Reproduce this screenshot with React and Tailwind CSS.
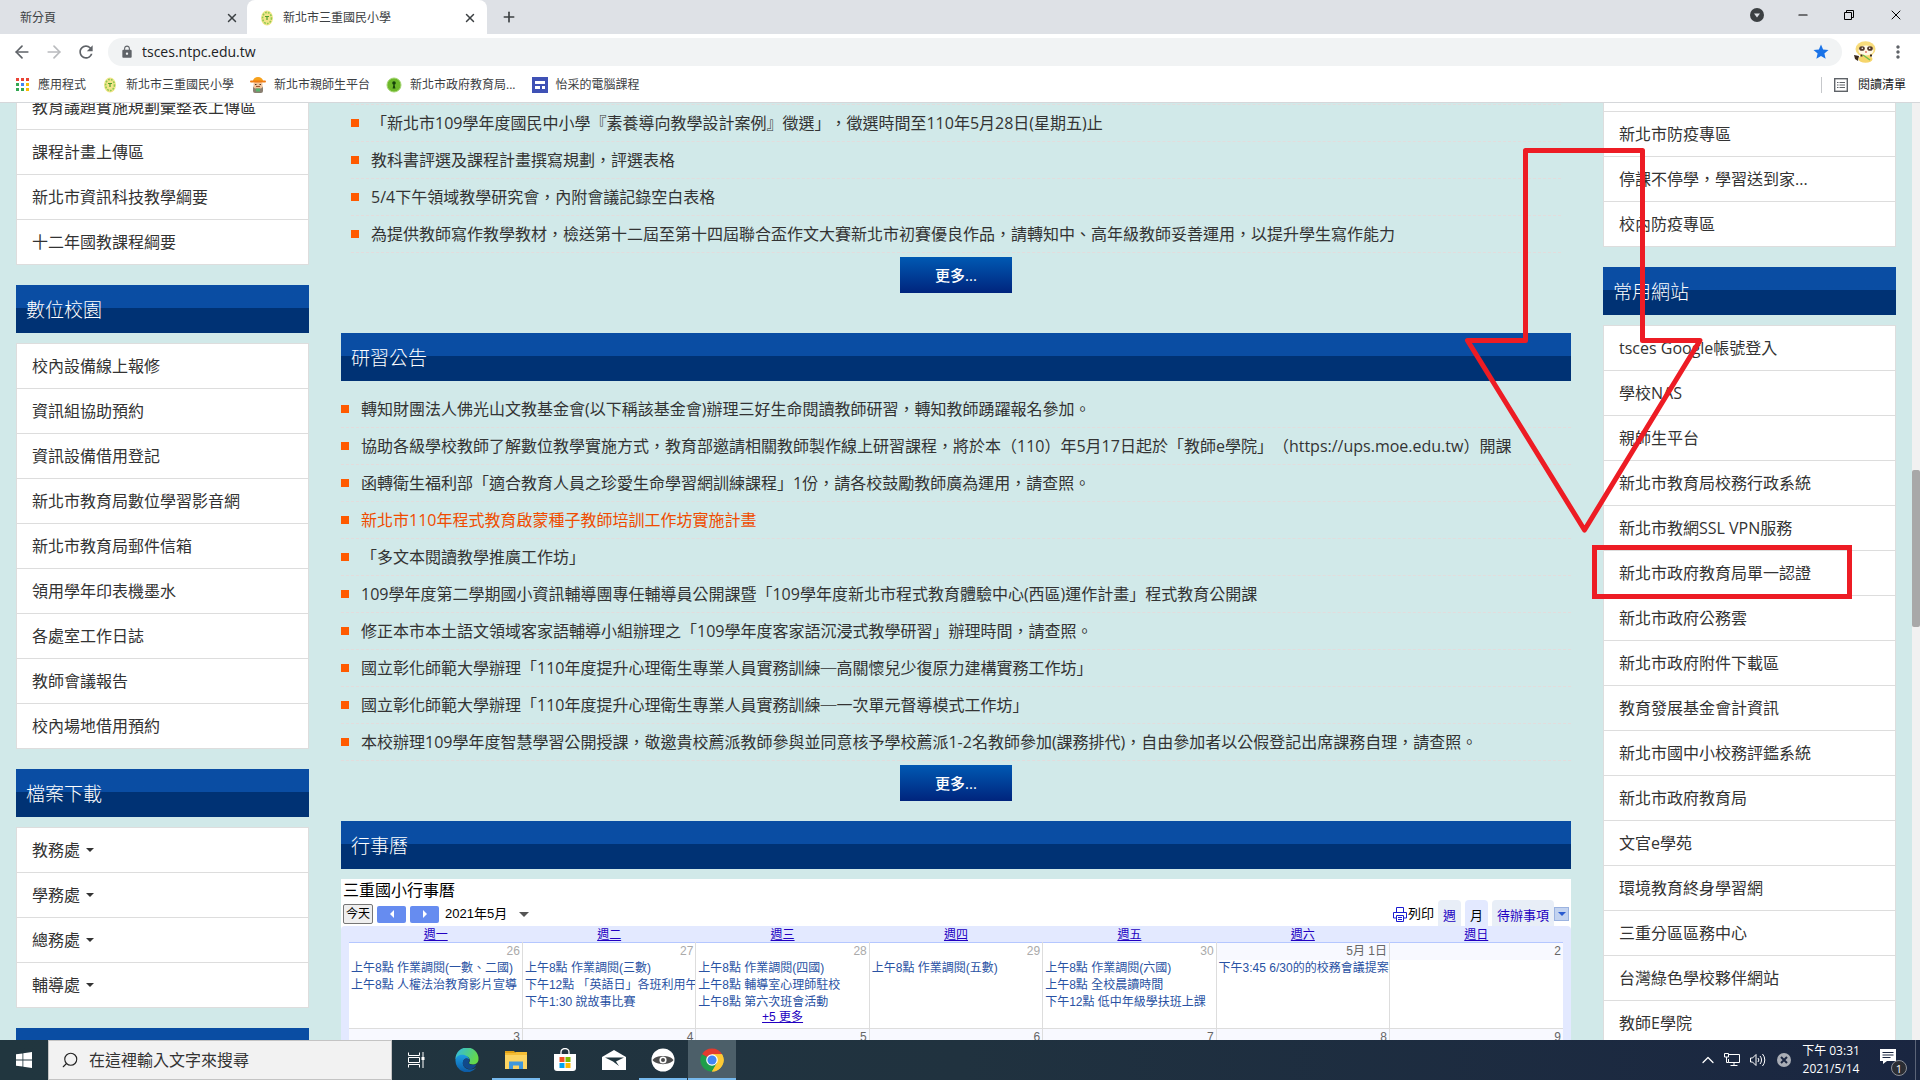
import React from "react";
import {
  ArrowLeft,
  ArrowRight,
  ChevronUp,
  Minus,
  Plus,
  Search,
  X,
} from "lucide-react";
import { MdLock, MdRefresh, MdStar, MdMoreVert } from "react-icons/md";

const courseLinks = ["教育議題實施規劃彙整表上傳區", "課程計畫上傳區", "新北市資訊科技教學綱要", "十二年國教課程綱要"];

const campusLinks = [
  "校內設備線上報修",
  "資訊組協助預約",
  "資訊設備借用登記",
  "新北市教育局數位學習影音網",
  "新北市教育局郵件信箱",
  "領用學年印表機墨水",
  "各處室工作日誌",
  "教師會議報告",
  "校內場地借用預約",
];

const downloadMenus = ["教務處", "學務處", "總務處", "輔導處"];

const epidemicLinks = ["新北市防疫專區", "停課不停學，學習送到家...", "校內防疫專區"];

const commonLinks = [
  "tsces Google帳號登入",
  "學校NAS",
  "親師生平台",
  "新北市教育局校務行政系統",
  "新北市教網SSL VPN服務",
  "新北市政府教育局單一認證",
  "新北市政府公務雲",
  "新北市政府附件下載區",
  "教育發展基金會計資訊",
  "新北市國中小校務評鑑系統",
  "新北市政府教育局",
  "文官e學苑",
  "環境教育終身學習網",
  "三重分區區務中心",
  "台灣綠色學校夥伴網站",
  "教師E學院",
];

const teachingNews = [
  { title: "「新北市109學年度國民中小學『素養導向教學設計案例』徵選」，徵選時間至110年5月28日(星期五)止" },
  { title: "教科書評選及課程計畫撰寫規劃，評選表格" },
  { title: "5/4下午領域教學研究會，內附會議記錄空白表格" },
  { title: "為提供教師寫作教學教材，檢送第十二屆至第十四屆聯合盃作文大賽新北市初賽優良作品，請轉知中、高年級教師妥善運用，以提升學生寫作能力" },
];

const studyNews = [
  { title: "轉知財團法人佛光山文教基金會(以下稱該基金會)辦理三好生命閱讀教師研習，轉知教師踴躍報名參加。" },
  { title: "協助各級學校教師了解數位教學實施方式，教育部邀請相關教師製作線上研習課程，將於本（110）年5月17日起於「教師e學院」（https://ups.moe.edu.tw）開課" },
  { title: "函轉衛生福利部「適合教育人員之珍愛生命學習網訓練課程」1份，請各校鼓勵教師廣為運用，請查照。" },
  { title: "新北市110年程式教育啟蒙種子教師培訓工作坊實施計畫", hot: true },
  { title: "「多文本閱讀教學推廣工作坊」" },
  { title: "109學年度第二學期國小資訊輔導團專任輔導員公開課暨「109學年度新北市程式教育體驗中心(西區)運作計畫」程式教育公開課" },
  { title: "修正本市本土語文領域客家語輔導小組辦理之「109學年度客家語沉浸式教學研習」辦理時間，請查照。" },
  { title: "國立彰化師範大學辦理「110年度提升心理衛生專業人員實務訓練─高關懷兒少復原力建構實務工作坊」" },
  { title: "國立彰化師範大學辦理「110年度提升心理衛生專業人員實務訓練─一次單元督導模式工作坊」" },
  { title: "本校辦理109學年度智慧學習公開授課，敬邀貴校薦派教師參與並同意核予學校薦派1-2名教師參加(課務排代)，自由參加者以公假登記出席課務自理，請查照。" },
];

const weekdays = ["週一", "週二", "週三", "週四", "週五", "週六", "週日"];

const firstWeek = [
  { date: "26", events: ["上午8點 作業調閱(一數、二國)", "上午8點 人權法治教育影片宣導"] },
  { date: "27", events: ["上午8點 作業調閱(三數)", "下午12點 「英語日」各班利用午", "下午1:30 說故事比賽"] },
  { date: "28", events: ["上午8點 作業調閱(四國)", "上午8點 輔導室心理師駐校", "上午8點 第六次班會活動"], more: "+5 更多" },
  { date: "29", events: ["上午8點 作業調閱(五數)"] },
  { date: "30", events: ["上午8點 作業調閱(六國)", "上午8點 全校晨讀時間", "下午12點 低中年級學扶班上課"] },
  { date: "5月 1日", current: true, events: ["下午3:45 6/30的的校務會議提案"] },
  { date: "2", current: true, events: [] },
];

const secondWeek = ["3", "4", "5", "6", "7", "8", "9"];

/* ---------- small drawings ---------- */

function SchoolIcon() {
  return (
    <svg viewBox="0 0 16 16" className="w-4 h-4 shrink-0">
      <ellipse cx="8" cy="8" rx="6" ry="7.500" fill="#f3e58a" />
      <ellipse cx="8" cy="8" rx="4.400" ry="5.600" fill="none" stroke="#8fcb52" strokeWidth="1.600" strokeDasharray="1.800 1.200" />
      <path d="M6 6.500h4M8 6.500v3.500" stroke="#4f9d2c" strokeWidth="1.200" />
    </svg>
  );
}

function ParentIcon() {
  return (
    <svg viewBox="0 0 16 16" className="w-4 h-4 shrink-0">
      <rect x="3" y="9" width="10" height="7" rx="2" fill="#8a7f72" />
      <rect x="3.500" y="5" width="9" height="6.500" rx="2" fill="#f2c49b" />
      <path d="M5 7.500h1.500M9.500 7.500H11" stroke="#4a3326" />
      <path d="M6 9.500h4" stroke="#a4552e" />
      <path d="M3 4a5 4 0 0 1 10 0z" fill="#f7a11b" />
      <rect x="0" y="3.500" width="16" height="2" rx="1" fill="#ef7d13" />
      <rect x="6" y="11.500" width="4" height="3" fill="#58b56b" />
    </svg>
  );
}

function KeyholeIcon() {
  return (
    <svg viewBox="0 0 16 16" className="w-4 h-4 shrink-0">
      <circle cx="8" cy="8" r="7" fill="#6db82a" stroke="#a5d574" />
      <circle cx="8" cy="6" r="1.800" fill="#16420a" />
      <path d="M8 5l1.400 6.500H6.600z" fill="#16420a" />
    </svg>
  );
}

function SitesIcon() {
  return (
    <svg viewBox="0 0 16 16" className="w-4 h-4 shrink-0">
      <path d="M0 0h16v16H0z" fill="#3f51b5" />
      <path d="M3 4h10v3H3zM3 9h5v3H3zM10 9h3v3h-3z" fill="#fff" />
    </svg>
  );
}

function AppsIcon() {
  const colors = ["#ea4335", "#ea4335", "#ea4335", "#34a853", "#4285f4", "#fbbc05", "#34a853", "#34a853", "#fbbc05"];
  return (
    <svg viewBox="0 0 14 14" className="w-3.5 h-3.5 shrink-0">
      {colors.map((color, i) => (
        <rect key={i} x={(i % 3) * 5} y={Math.floor(i / 3) * 5} width="3" height="3" fill={color} />
      ))}
    </svg>
  );
}

function ReadingListIcon() {
  return (
    <svg viewBox="0 0 14 14" className="w-3.5 h-3.5 shrink-0" fill="none" stroke="#5f6368">
      <rect x="0.700" y="0.700" width="12.600" height="12.600" strokeWidth="1.400" />
      <path d="M3 4.500h1.500M5.500 4.500H11M3 7h1.500M5.500 7H11M3 9.500h1.500M5.500 9.500H11" strokeWidth="1.200" />
    </svg>
  );
}

function AvatarIcon() {
  return (
    <svg viewBox="0 0 22 22" className="w-[22px] h-[22px]">
      <path d="M0 14l5 1-1 5-3-2z" fill="#3a2a1d" />
      <ellipse cx="11.500" cy="18" rx="7" ry="3.800" fill="#f6d56b" />
      <ellipse cx="11.500" cy="8" rx="10" ry="7.800" fill="#f8dc7c" />
      <ellipse cx="12" cy="9.500" rx="7.500" ry="5" fill="#fff8e6" />
      <ellipse cx="8" cy="7.500" rx="2.800" ry="2.300" fill="#51372a" />
      <ellipse cx="16" cy="7.500" rx="2.800" ry="2.300" fill="#51372a" />
      <circle cx="8.300" cy="7.300" r="0.800" fill="#fff" />
      <circle cx="15.700" cy="7.300" r="0.800" fill="#fff" />
      <circle cx="12" cy="11" r="0.900" fill="#e06a5a" />
      <path d="M7.500 13.500v2M17 13.500v2" stroke="#3a2a1d" strokeWidth="2" />
      <path d="M9 14l7 5" stroke="#6fbf4a" strokeWidth="1.500" />
    </svg>
  );
}

function PrintIcon() {
  return (
    <svg viewBox="0 0 14 15" className="w-3.5 h-[15px]" fill="none" stroke="#1a1ad0">
      <path d="M3.500 5V0.500h7V5M3 11H0.500V5.500h13V11H11" />
      <path d="M3.500 8.500h7v6h-7zM5 10.500h4M5 12.500h4" />
    </svg>
  );
}

function StartIcon() {
  return (
    <svg viewBox="0 0 16 16" className="w-4 h-4" fill="#fff">
      <path d="M0 2.300L6.500 1.400v6.200H0zM7.300 1.300L16 0v7.600H7.300zM0 8.400h6.500v6.200L0 13.700zM7.300 8.400H16V16l-8.700-1.300z" />
    </svg>
  );
}

function TaskViewIcon() {
  return (
    <svg viewBox="0 0 17 16" className="w-[17px] h-4" fill="none" stroke="#fff">
      <path d="M0.500 0.500V3.500H11.500V0.500M0.500 15.500V12.500H11.500V15.500M0.500 5.500h11v5H0.500zM15 0v16" />
      <path d="M13.500 5h3v3h-3z" fill="#fff" stroke="none" />
    </svg>
  );
}

function EdgeIcon() {
  return (
    <svg viewBox="0 0 24 24" className="w-6 h-6">
      <defs>
        <linearGradient id="edgeTop" x1="0" y1="0" x2="1" y2="0.400">
          <stop offset="0" stopColor="#2fb8ea" />
          <stop offset="1" stopColor="#64d94a" />
        </linearGradient>
        <linearGradient id="edgeLow" x1="0" y1="0" x2="0" y2="1">
          <stop offset="0" stopColor="#1b9de2" />
          <stop offset="1" stopColor="#0c59a4" />
        </linearGradient>
      </defs>
      <path d="M0.500 11A11.500 11.500 0 0 1 23.500 11c0 4-3 5.500-5.500 5.500-3 0-4.500-1-3.700-2 1.400-2 .5-6-3.800-6C5 8.500 0.500 12 0.500 11z" fill="url(#edgeTop)" />
      <path d="M0.500 12C1 7.500 6 6 10 7.200c2.500.8 4 2.600 4.300 4.300-3-2.500-6.500-.5-6.500 3.500 0 4 4 7 8.500 6.500 2-.2 4-1.200 5-2A11.500 11.500 0 0 1 0.500 12z" fill="url(#edgeLow)" />
      <path d="M7.800 15c0-4 3.500-6 6.500-3.500.2 1.500-.8 2.500-.8 3.200 0 1.500 3 3 7.800 1.500-.2 1.700-2.700 4.800-6 4.800-4 0-7.500-2.500-7.500-6z" fill="#114a8b" />
    </svg>
  );
}

function FolderIcon() {
  return (
    <svg viewBox="0 0 22 18" className="w-[22px] h-[18px]">
      <path d="M0 0h9l2 2.500H0z" fill="#e0a015" />
      <path d="M0 2h22v16H0z" fill="#fcd462" />
      <path d="M0 2h9l2-1h11v3H0z" fill="#f5bd35" />
      <path d="M4 18v-7.500h14V18h-4v-3.500H8V18z" fill="#3f97dc" />
    </svg>
  );
}

function StoreIcon() {
  return (
    <svg viewBox="0 0 22 24" className="w-[22px] h-6">
      <path d="M7 6V4a4 3.500 0 0 1 8 0v2" fill="none" stroke="#fff" strokeWidth="1.300" />
      <path d="M0 6h22v14a3 3 0 0 1-3 3H3a3 3 0 0 1-3-3z" fill="#fff" />
      <path d="M5.500 9h5v5h-5z" fill="#f25022" />
      <path d="M11.500 9h5v5h-5z" fill="#7fba00" />
      <path d="M5.500 15h5v5h-5z" fill="#00a4ef" />
      <path d="M11.500 15h5v5h-5z" fill="#ffb900" />
    </svg>
  );
}

function MailIcon() {
  return (
    <svg viewBox="0 0 24 20" className="w-6 h-5">
      <path d="M0 7L12 0l12 7v13H0z" fill="#fff" />
      <path d="M3 7.500h19L14 11.500l3 4.500-6-4.500z" fill="#21363f" />
    </svg>
  );
}

function EyeIcon() {
  return (
    <svg viewBox="0 0 24 24" className="w-6 h-6">
      <circle cx="12" cy="12" r="11.500" fill="#fff" />
      <path d="M1.500 12C5 6.500 19 6.500 22.500 12 19 17.500 5 17.500 1.500 12z" fill="#4d4d4d" />
      <circle cx="12" cy="12" r="3.600" fill="#fff" />
      <circle cx="12" cy="12" r="2" fill="#4d4d4d" />
    </svg>
  );
}

function ChromeIcon() {
  return (
    <svg viewBox="0 0 24 24" className="w-6 h-6">
      <path d="M12 12L2 6.200A11.500 11.500 0 0 1 22 6.200z" fill="#e33b2e" />
      <path d="M12 12V6.200h10A11.500 11.500 0 0 1 12 23.500z" fill="#fcc934" />
      <path d="M12 12l5 3-5 8.500A11.500 11.500 0 0 1 2 6.200z" fill="#1e9e4a" />
      <path d="M12 6.200h10A11.500 11.500 0 0 1 12 23.500l5-8.600z" fill="#fcc934" />
      <circle cx="12" cy="12" r="5.800" fill="#fff" />
      <circle cx="12" cy="12" r="4.600" fill="#4285f4" />
    </svg>
  );
}

/* ---------- browser chrome ---------- */

function Bookmark({ icon, children }) {
  return (
    <a href="#" className="flex items-center gap-2">
      {icon}
      {children}
    </a>
  );
}

function BrowserChrome() {
  return (
    <header className="shrink-0 bg-white text-xs text-[#3c4043] border-b border-[#d5d7da]">
      <div className="flex h-[34px] bg-[#dee1e6]">
        <div className="flex items-center justify-between w-[247px] pt-0.5 pl-5 pr-2">
          <span>新分頁</span>
          <button aria-label="關閉分頁">
            <X className="w-3.5 h-3.5" strokeWidth={2.5} />
          </button>
        </div>
        <div className="flex items-center w-60 pt-0.5 pl-3 pr-2.5 bg-white rounded-t-lg">
          <SchoolIcon />
          <span className="flex-1 pl-2">新北市三重國民小學</span>
          <button aria-label="關閉分頁">
            <X className="w-3.5 h-3.5" strokeWidth={2.5} />
          </button>
        </div>
        <button aria-label="新增分頁" className="pl-3.5">
          <Plus className="w-4 h-4" strokeWidth={2.5} />
        </button>
        <div className="flex items-center gap-8 ml-auto pr-4 pb-1 text-black">
          <svg viewBox="0 0 14 14" className="w-3.5 h-3.5">
            <circle cx="7" cy="7" r="7" fill="#3c4043" />
            <path d="M4 5.500h6L7 9.500z" fill="#dee1e6" />
          </svg>
          <button aria-label="最小化">
            <Minus className="w-3.5 h-3.5" strokeWidth={2} />
          </button>
          <button aria-label="還原">
            <svg viewBox="0 0 14 14" className="w-3.5 h-3.5" fill="none" stroke="#000">
              <path d="M2.500 4.500h7v7h-7zM4.500 4V2.500h7v7H10" />
            </svg>
          </button>
          <button aria-label="關閉">
            <X className="w-4 h-4" strokeWidth={1.5} />
          </button>
        </div>
      </div>

      <div className="flex items-center h-9 px-3 text-[#5f6368]">
        <button aria-label="上一頁" className="w-8">
          <ArrowLeft className="w-5 h-5" />
        </button>
        <button aria-label="下一頁" className="w-8 text-[#b9bbbe]">
          <ArrowRight className="w-5 h-5" />
        </button>
        <button aria-label="重新載入" className="w-8">
          <MdRefresh className="w-5 h-5" />
        </button>
        <label className="flex flex-1 items-center h-7 px-3 bg-[#f1f3f4] rounded-full">
          <MdLock className="w-3.5 h-3.5" />
          <input
            type="text"
            aria-label="網址"
            defaultValue="tsces.ntpc.edu.tw"
            className="flex-1 pl-2 bg-transparent text-sm text-[#202124] focus:outline-none"
          />
          <MdStar className="w-[18px] h-[18px] text-[#1a73e8]" />
        </label>
        <div className="flex items-center gap-3 pl-3">
          <AvatarIcon />
          <button aria-label="選單">
            <MdMoreVert className="w-5 h-5" />
          </button>
        </div>
      </div>

      <nav className="flex items-center h-8 pl-4 pr-3.5 pb-0.5 gap-4 text-[#3c4043]">
        <Bookmark icon={<AppsIcon />}>應用程式</Bookmark>
        <Bookmark icon={<SchoolIcon />}>新北市三重國民小學</Bookmark>
        <Bookmark icon={<ParentIcon />}>新北市親師生平台</Bookmark>
        <Bookmark icon={<KeyholeIcon />}>新北市政府教育局...</Bookmark>
        <Bookmark icon={<SitesIcon />}>怡采的電腦課程</Bookmark>
        <div className="flex items-center gap-2.5 h-4 ml-auto pl-3 border-l border-[#c6c8cb] text-[#202124]">
          <ReadingListIcon />
          閱讀清單
        </div>
      </nav>
    </header>
  );
}

/* ---------- site blocks ---------- */

function BlockTitle({ children }) {
  return (
    <h2 className="h-12 px-2.5 text-[19px] leading-[50px] font-light text-white bg-linear-to-b from-[#0a4da3] from-48% to-[#003274] to-48%">
      {children}
    </h2>
  );
}

function LinkList({ items, caret }) {
  return (
    <ul className="bg-white border-x border-t border-[#ddd]">
      {items.map((item) => (
        <li key={item} className="border-b border-[#ddd]">
          <a href="#" className="flex items-center gap-1.5 px-[15px] py-2.5 leading-6">
            {item}
            {caret && (
              <span className="border-x-4 border-t-4 border-x-transparent border-t-[#333]" />
            )}
          </a>
        </li>
      ))}
    </ul>
  );
}

function SideBlock({ title, items, caret }) {
  return (
    <section className="flex flex-col gap-2.5">
      <BlockTitle>{title}</BlockTitle>
      <LinkList items={items} caret={caret} />
    </section>
  );
}

function NewsList({ items }) {
  return (
    <ul>
      {items.map((item) => (
        <li key={item.title} className="flex items-center gap-3 h-[37px] border-b border-dashed border-[#e3dcdc]">
          <span className="w-2 h-2 shrink-0 bg-[#ff5a00]" />
          <a href="#" className={`whitespace-nowrap ${item.hot ? "text-[#ef4c00]" : ""}`}>
            {item.title}
          </a>
        </li>
      ))}
    </ul>
  );
}

function MoreButton() {
  return (
    <div className="flex justify-center pt-1">
      <button className="w-28 h-9 text-[15px] font-medium text-white bg-linear-to-b from-[#0059b3] to-[#00247d]">
        更多...
      </button>
    </div>
  );
}

function Calendar() {
  return (
    <div className="bg-white text-xs text-black font-['Liberation_Sans','Noto_Sans_CJK_TC',sans-serif]">
      <h3 className="pl-0.5 text-base leading-6 h-[21px]">三重國小行事曆</h3>
      <div className="flex items-end justify-between h-[26px] px-0.5">
        <div className="flex items-center gap-1 pb-0.5">
          <button className="h-5 px-0.5 bg-[#efefef] border border-[#767676] rounded-xs">今天</button>
          <button aria-label="上個月" className="flex items-center justify-center w-[29px] h-[17px] bg-[#668cf0] rounded-xs">
            <span className="border-y-4 border-r-4 border-y-transparent border-r-white" />
          </button>
          <button aria-label="下個月" className="flex items-center justify-center w-[29px] h-[17px] bg-[#668cf0] rounded-xs">
            <span className="border-y-4 border-l-4 border-y-transparent border-l-white" />
          </button>
          <button className="flex items-center gap-3 pl-0.5 text-[13px] leading-5">
            2021年5月
            <span className="border-x-5 border-t-5 border-x-transparent border-t-[#555]" />
          </button>
        </div>
        <div className="flex items-end gap-1 text-[13px] leading-5 text-[#2200c1]">
          <a href="#" className="flex items-center gap-px pb-0.5 text-black">
            <PrintIcon />
            列印
          </a>
          <a href="#" className="px-[5px] pt-1.5 bg-[#e8eef7] rounded-t">週</a>
          <a href="#" className="px-[5px] pt-1.5 bg-[#e3e9ff] rounded-t text-black">月</a>
          <div className="flex items-end">
            <a href="#" className="px-[5px] pt-1.5 bg-[#e8eef7] rounded-t">待辦事項</a>
            <button aria-label="更多選項" className="flex items-center justify-center w-[15px] h-3.5 mb-[5px] bg-[#c3d3f0] border border-[#9bb3e0]">
              <span className="border-x-4 border-t-4 border-x-transparent border-t-[#2a5bd0]" />
            </button>
          </div>
        </div>
      </div>

      <div className="px-2 bg-[#e3e9ff] rounded-t">
        <table className="w-full table-fixed border-collapse bg-white">
          <thead>
            <tr className="bg-[#e3e9ff] border-b border-[#b5c7ff]">
              {weekdays.map((day) => (
                <th key={day} className="p-0 pt-0.5 font-normal leading-[14px]">
                  <a href="#" className="text-[#2200c1] underline">{day}</a>
                </th>
              ))}
            </tr>
          </thead>
          <tbody>
            <tr className="h-[86px] border-b border-[#ddd]">
              {firstWeek.map((day) => (
                <td key={day.date} className="p-0 align-top border-r border-[#ddd] last:border-r-0">
                  <div className={`h-[17px] px-0.5 text-right leading-4 ${day.current ? "bg-[#f8f9ff] text-[#666]" : "text-[#aaa]"}`}>
                    {day.date}
                  </div>
                  {day.events.map((event) => (
                    <a key={event} href="#" className="block pl-0.5 leading-[17px] whitespace-nowrap overflow-hidden text-[#2952a3]">
                      {event}
                    </a>
                  ))}
                  {day.more && (
                    <a href="#" className="block text-center leading-3 text-[#2200c1] underline">{day.more}</a>
                  )}
                </td>
              ))}
            </tr>
            <tr className="bg-[#f8f9ff]">
              {secondWeek.map((date) => (
                <td key={date} className="h-24 px-0.5 py-0 align-top text-right leading-4 text-[#666] border-r border-[#ddd] last:border-r-0">
                  {date}
                </td>
              ))}
            </tr>
          </tbody>
        </table>
      </div>
    </div>
  );
}

function SchoolPage() {
  return (
    <main className="flex flex-1 min-h-0 overflow-hidden bg-[#d1e9e9] text-base text-[#333]">
      <div className="grid flex-1 grid-cols-[293px_1fr_293px] items-start gap-8 px-4 -mt-[19px]">
        <aside className="flex flex-col gap-5">
          <LinkList items={courseLinks} />
          <SideBlock title="數位校園" items={campusLinks} />
          <SideBlock title="檔案下載" items={downloadMenus} caret />
          <BlockTitle />
        </aside>

        <div className="flex flex-col min-w-0">
          <section className="px-2.5 pt-5">
            <div className="border-t border-dashed border-[#e3dcdc]">
              <NewsList items={teachingNews} />
            </div>
            <MoreButton />
          </section>
          <section className="flex flex-col pt-10">
            <BlockTitle>研習公告</BlockTitle>
            <div className="pt-2.5">
              <NewsList items={studyNews} />
            </div>
            <MoreButton />
          </section>
          <section className="flex flex-col gap-2.5 pt-5">
            <BlockTitle>行事曆</BlockTitle>
            <Calendar />
          </section>
        </div>

        <aside className="flex flex-col gap-5">
          <div>
            <div className="h-[27px] bg-white border-x border-[#ddd]" />
            <LinkList items={epidemicLinks} />
          </div>
          <SideBlock title="常用網站" items={commonLinks} />
        </aside>
      </div>

      {/* Scrollbar */}
      <div className="w-2 shrink-0 pt-[367px] bg-[#f1f1f1]">
        <div className="h-[157px] rounded-xs bg-[#a8a8a8]" />
      </div>
    </main>
  );
}

/* ---------- taskbar ---------- */

function TaskButton({ label, running, active, children }) {
  return (
    <button
      aria-label={label}
      className={`flex items-center justify-center w-12 h-full ${active ? "bg-[#4c5f69]" : ""} ${
        running ? "border-b-2 border-[#76b9ed] pt-0.5" : ""
      }`}
    >
      {children}
    </button>
  );
}

function Taskbar() {
  return (
    <footer className="flex items-center h-10 shrink-0 bg-linear-to-r from-[#21363f] via-[#20323f] to-[#1a2641] text-white">
      <TaskButton label="開始">
        <StartIcon />
      </TaskButton>
      <label className="flex items-center gap-2.5 w-[344px] h-full px-3 bg-[#f2f2f2] border border-[#c4c4c4] text-[#222]">
        <Search className="w-[18px] h-[18px] -scale-x-100" strokeWidth={1.5} />
        <input
          type="text"
          aria-label="搜尋"
          placeholder="在這裡輸入文字來搜尋"
          className="flex-1 bg-transparent text-base placeholder:text-[#333] focus:outline-none"
        />
      </label>
      <TaskButton label="工作檢視">
        <TaskViewIcon />
      </TaskButton>
      <div className="flex gap-px h-full pl-[3px]">
        <TaskButton label="Edge">
          <EdgeIcon />
        </TaskButton>
        <TaskButton label="檔案總管" running>
          <FolderIcon />
        </TaskButton>
        <TaskButton label="Store">
          <StoreIcon />
        </TaskButton>
        <TaskButton label="郵件">
          <MailIcon />
        </TaskButton>
        <TaskButton label="檢視器" running>
          <EyeIcon />
        </TaskButton>
        <TaskButton label="Chrome" running active>
          <ChromeIcon />
        </TaskButton>
      </div>

      <div className="flex items-center h-full ml-auto pr-1">
        <div className="flex items-center gap-1.5">
          <ChevronUp className="w-5 h-5" strokeWidth={1.5} />
          <svg viewBox="0 0 16 14" className="w-4 h-3.5" fill="none" stroke="#fff">
            <path d="M5 1.500h10.500v8H4.500V6M10 9.500v3M6.500 12.500h7M0.500 0.500h4v3.500h-4zM2.500 4v5.500h2" />
          </svg>
          <svg viewBox="0 0 17 14" className="w-[17px] h-3.5 ml-1" fill="none" stroke="#fff">
            <path d="M0.500 5v4h2L6 12.500v-11L2.500 5zM8 5a3 3 0 0 1 0 4M10 3a6 6 0 0 1 0 8M12.500 1a9 9 0 0 1 0 12" />
          </svg>
          <svg viewBox="0 0 14 14" className="w-3.5 h-3.5 ml-1">
            <circle cx="7" cy="7" r="7" fill="#a9adb5" />
            <path d="M4 4l6 6M10 4l-6 6" stroke="#1b2741" strokeWidth="2" />
          </svg>
        </div>
        <div className="w-20 text-center text-xs leading-[18px]">
          <p>下午 03:31</p>
          <p>2021/5/14</p>
        </div>
        <button aria-label="通知" className="relative w-10">
          <svg viewBox="0 0 24 24" className="w-6 h-6 mx-auto">
            <path d="M1 1h16v12H8l-4 3v-3H1z" fill="#fff" />
            <path d="M3.500 4.500h11M3.500 7h11M3.500 9.500h8" stroke="#1b2741" />
          </svg>
          <span className="absolute right-1 -bottom-1 flex items-center justify-center w-4 h-4 rounded-full bg-[#2b2d33] border border-[#8b8f98] text-[11px] leading-none">
            1
          </span>
        </button>
        <span className="w-px h-full ml-1 bg-[#5b6478]" />
      </div>
    </footer>
  );
}

/* Hand-drawn arrow and frame pointing at the single sign-on link */
function RedMarker() {
  return (
    <svg
      viewBox="0 0 388 452"
      className="absolute top-[147px] right-[68px] w-[388px] h-[452px] pointer-events-none"
      fill="none"
      stroke="#ed1c24"
      strokeWidth="5"
      strokeLinejoin="round"
    >
      <path d="M61.500 3.500H178.500V193.500H236L120.500 383L3.500 193.500H61.500z" />
      <path d="M130.500 400.500h255v49h-255z" strokeLinejoin="miter" />
    </svg>
  );
}

export default function App() {
  return (
    <div className="relative flex flex-col h-screen overflow-hidden [text-spacing-trim:space-all] font-['Open_Sans','Noto_Sans_CJK_TC',sans-serif]">
      <BrowserChrome />
      <SchoolPage />
      <Taskbar />
      <RedMarker />
    </div>
  );
}
